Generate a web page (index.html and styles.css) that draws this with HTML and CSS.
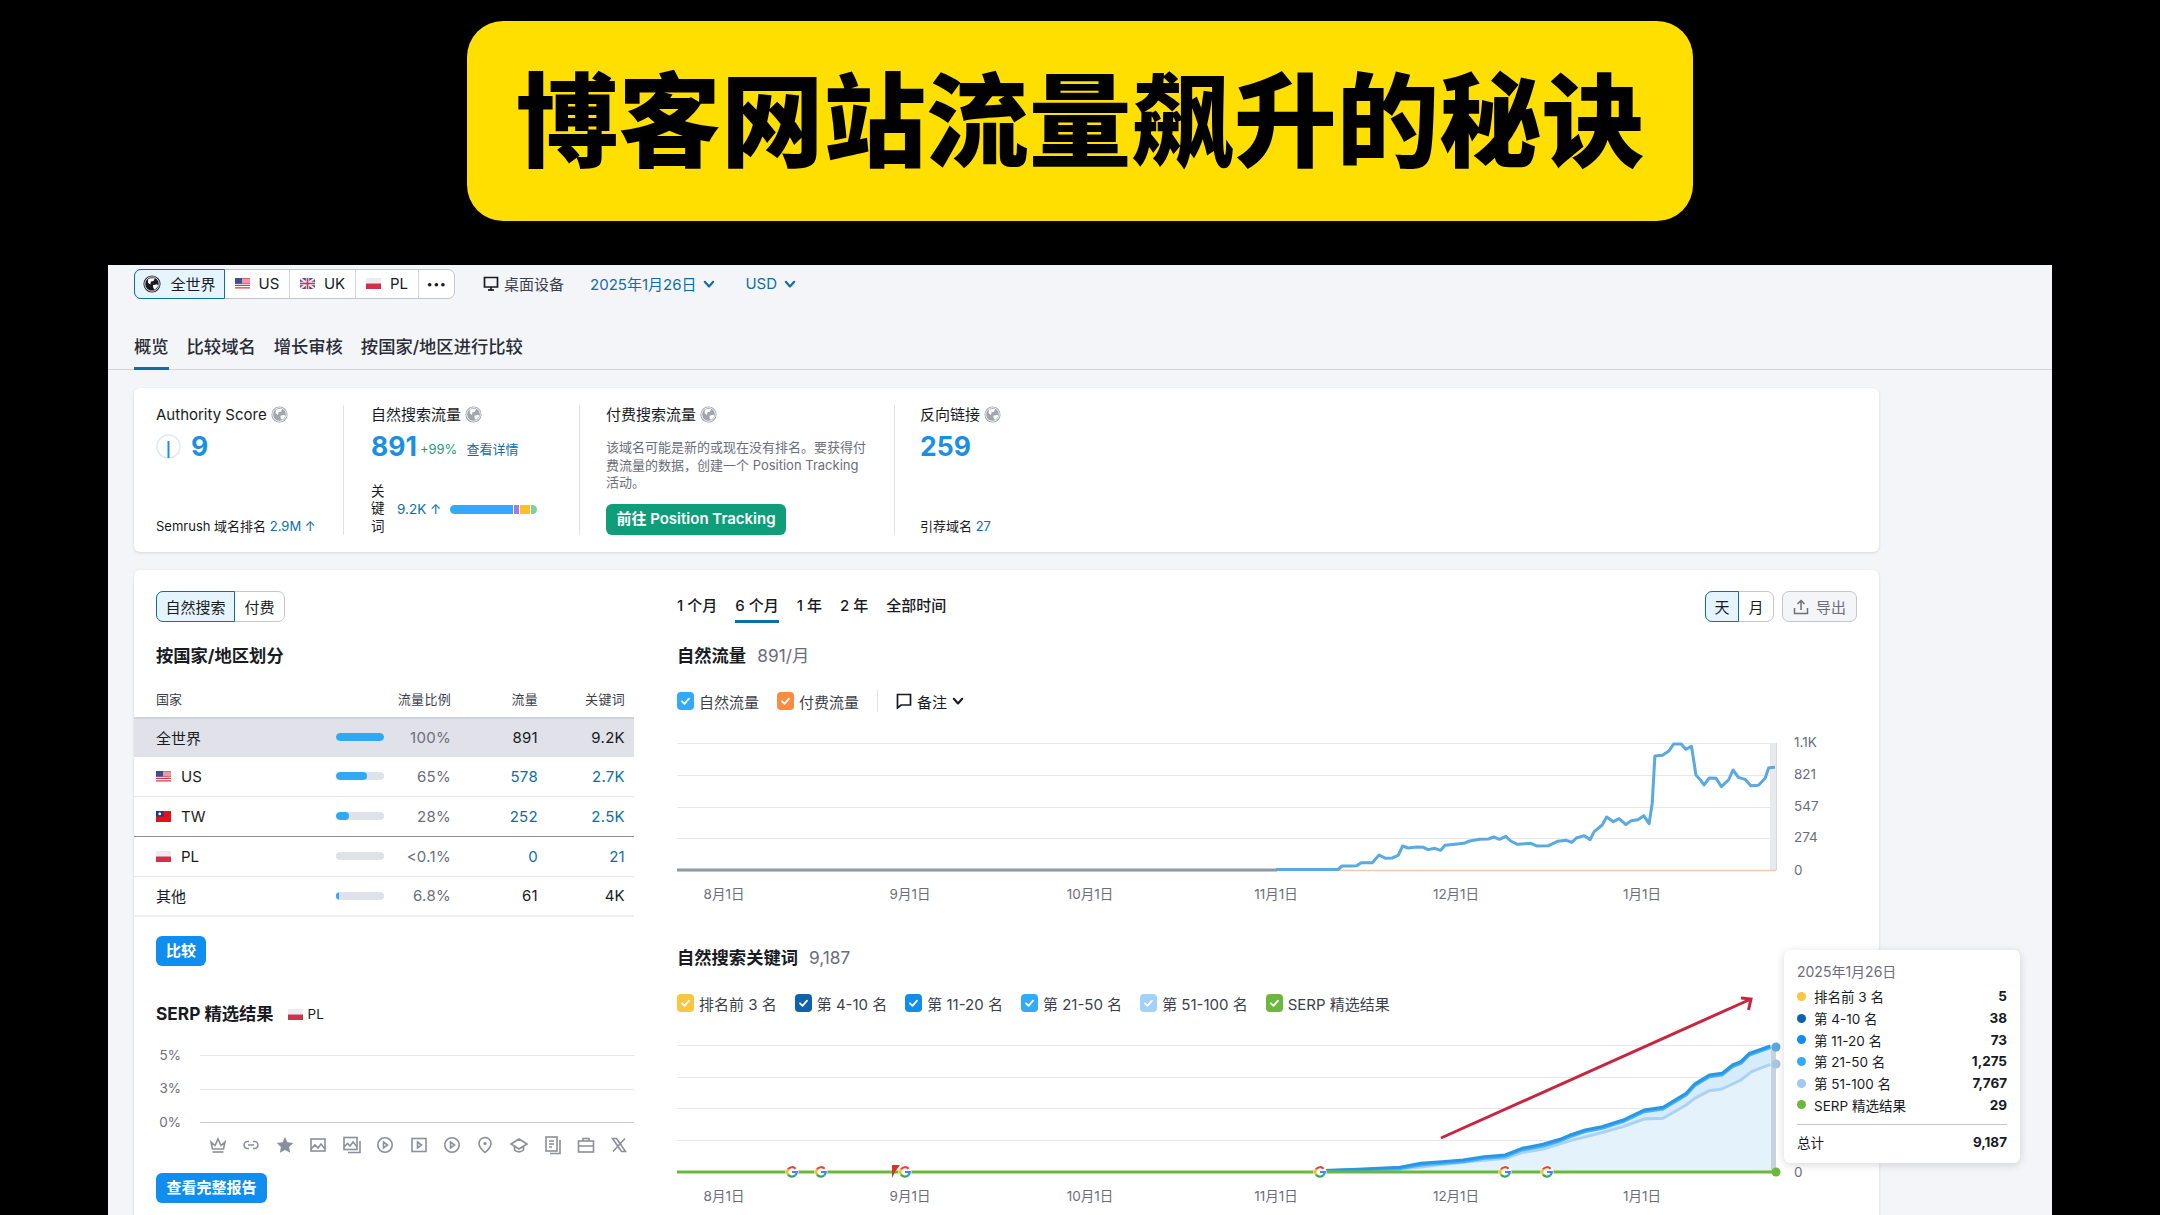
FILE: index.html
```html
<!DOCTYPE html>
<html lang="zh-CN">
<head>
  <meta charset="UTF-8">
  <title>博客网站流量飙升的秘诀</title>
  <link rel="stylesheet" href="styles.css">
</head>
<body>

<svg class="defs" width="0" height="0">
  <symbol id="globe" viewBox="0 0 16 16">
    <circle cx="8" cy="8" r="7.6" fill="currentColor"/>
    <path d="M4.6 3.6c2-1.4 4-.4 6-.8l-1.2 2.6-2.4.4-.4 2.6-2.2-1.6z" fill="#fff"/>
    <path d="M8.8 9.2l3.8-1 1 1.6-3.2 3.4-1.2-1.6z" fill="#fff"/>
    <circle cx="8" cy="8" r="6.4" fill="none" stroke="#fff" stroke-width=".8"/>
  </symbol>
  <symbol id="us" viewBox="0 0 15 11">
    <rect width="15" height="11" fill="#fff"/>
    <path d="M0 .8h15M0 3h15M0 5.2h15M0 7.4h15M0 9.8h15" stroke="#d8354a" stroke-width="1.2"/>
    <rect width="7" height="5.6" fill="#3d4f94"/>
  </symbol>
  <symbol id="uk" viewBox="0 0 15 11">
    <rect width="15" height="11" fill="#44528e"/>
    <path d="M0 0l15 11M15 0L0 11" stroke="#e9e9ef" stroke-width="2"/>
    <path d="M7.5 0v11M0 5.5h15" stroke="#e9e9ef" stroke-width="3.4"/>
    <path d="M7.5 0v11M0 5.5h15" stroke="#c9354a" stroke-width="1.6"/>
  </symbol>
  <symbol id="pl" viewBox="0 0 15 11">
    <rect width="15" height="5.5" fill="#ececf0"/>
    <rect y="5.5" width="15" height="5.5" fill="#d22f4a"/>
  </symbol>
  <symbol id="tw" viewBox="0 0 15 11">
    <rect width="15" height="11" fill="#e3101e"/>
    <rect width="7.5" height="5.5" fill="#1c2f93"/>
    <circle cx="3.75" cy="2.75" r="1.5" fill="#fff"/>
  </symbol>
  <symbol id="tick" viewBox="0 0 17 17">
    <path d="M5 8.8l2.5 2.5L12 6.2" fill="none" stroke="#fff" stroke-width="1.8" stroke-linecap="round" stroke-linejoin="round"/>
  </symbol>
  <symbol id="chev" viewBox="0 0 10 10">
    <path d="M1.5 3.2L5 7l3.5-3.8" fill="none" stroke="currentColor" stroke-width="1.8" stroke-linecap="round" stroke-linejoin="round"/>
  </symbol>
  <symbol id="gg" viewBox="0 0 14 14">
    <circle cx="7" cy="7" r="6.6" fill="#fff"/>
    <path d="M10.6 3.8A4.8 4.8 0 0 0 3 4.4" fill="none" stroke="#e8453c" stroke-width="2.2"/>
    <path d="M3 4.4a4.8 4.8 0 0 0 0 5.2" fill="none" stroke="#f6bb15" stroke-width="2.2"/>
    <path d="M3 9.6a4.8 4.8 0 0 0 7.4.6" fill="none" stroke="#34a853" stroke-width="2.2"/>
    <path d="M10.4 10.2A4.8 4.8 0 0 0 11.8 7H7" fill="none" stroke="#4285f4" stroke-width="2.2"/>
  </symbol>
</svg>

<!-- 标题 -->
<div class="banner">
  <div class="banner-pill">博客网站流量飙升的秘诀</div>
</div>

<div class="panel">

  <!-- 顶部工具栏 -->
  <div class="toolbar">
    <div class="seg seg-geo">
      <div class="seg-item active w-world"><svg class="ic-18"><use href="#globe"/></svg>全世界</div>
      <div class="seg-item w-us"><svg class="flag"><use href="#us"/></svg>US</div>
      <div class="seg-item w-uk"><svg class="flag"><use href="#uk"/></svg>UK</div>
      <div class="seg-item w-pl"><svg class="flag"><use href="#pl"/></svg>PL</div>
      <div class="seg-item w-more">•••</div>
    </div>
    <div class="device">
      <svg class="ic-16" viewBox="0 0 16 16"><path d="M1.500 1.500h13v9.500h-13z" fill="none" stroke="#191b23" stroke-width="1.7"/><path d="M5 14h6" stroke="#191b23" stroke-width="1.7"/><path d="M8 11v3" stroke="#191b23" stroke-width="1.7"/></svg>
      桌面设备
    </div>
    <div class="picker picker-date">2025年1月26日<svg class="chev"><use href="#chev"/></svg></div>
    <div class="picker picker-usd">USD<svg class="chev"><use href="#chev"/></svg></div>
  </div>

  <div class="tabs">
    <div class="tab active">概览</div>
    <div class="tab">比较域名</div>
    <div class="tab">增长审核</div>
    <div class="tab">按国家/地区进行比较</div>
  </div>

  <!-- 指标卡片 -->
  <div class="card card-stats">
    <div class="stat stat-as">
      <div class="stat-label">Authority Score <svg class="ic-17"><use href="#globe"/></svg></div>
      <div class="stat-value">
        <svg class="gauge" viewBox="0 0 25 25"><circle cx="12.500" cy="12.500" r="11.500" fill="none" stroke="#dfe9f5" stroke-width="1.500"/><path d="M12.500 7v17" stroke="#1a8fe3" stroke-width="2"/></svg>
        <span class="big">9</span>
      </div>
      <div class="stat-foot">Semrush 域名排名 <span class="link">2.9M ↑</span></div>
    </div>
    <div class="stat stat-organic">
      <div class="stat-label">自然搜索流量 <svg class="ic-17"><use href="#globe"/></svg></div>
      <div class="stat-value">
        <span class="big">891</span>
        <span class="delta">+99%</span>
        <span class="detail">查看详情</span>
      </div>
      <div class="kw-row">
        <span class="kw-label">关键词</span>
        <span class="link kw-num">9.2K ↑</span>
        <div class="kw-bar">
          <i class="kb-blue"></i><i class="kb-purple"></i><i class="kb-yellow"></i><i class="kb-green"></i>
        </div>
      </div>
    </div>
    <div class="stat stat-paid">
      <div class="stat-label">付费搜索流量 <svg class="ic-17"><use href="#globe"/></svg></div>
      <p class="stat-desc">该域名可能是新的或现在没有排名。要获得付费流量的数据，创建一个 Position Tracking 活动。</p>
      <div class="btn-green">前往 Position Tracking</div>
    </div>
    <div class="stat stat-links">
      <div class="stat-label">反向链接 <svg class="ic-17"><use href="#globe"/></svg></div>
      <div class="stat-value"><span class="big">259</span></div>
      <div class="stat-foot">引荐域名 <span class="link">27</span></div>
    </div>
  </div>

  <!-- 主卡片 -->
  <div class="card card-main">
    <div class="col-left">
      <div class="seg seg-type">
        <div class="seg-item active w-org">自然搜索</div>
        <div class="seg-item w-paid">付费</div>
      </div>
      <h3 class="title">按国家/地区划分</h3>

      <div class="geo-table">
        <div class="geo-row geo-head">
          <span>国家</span><span></span><span class="num">流量比例</span><span class="num">流量</span><span class="num">关键词</span>
        </div>
        <div class="geo-row row-sel">
          <span>全世界</span>
          <div class="bar"><i style="width: 100%"></i></div>
          <span class="num pct">100%</span><span class="num">891</span><span class="num">9.2K</span>
        </div>
        <div class="geo-row">
          <span class="geo-name"><svg class="flag"><use href="#us"/></svg>US</span>
          <div class="bar"><i style="width: 65%"></i></div>
          <span class="num pct">65%</span><span class="num link">578</span><span class="num link">2.7K</span>
        </div>
        <div class="geo-row row-dark">
          <span class="geo-name"><svg class="flag"><use href="#tw"/></svg>TW</span>
          <div class="bar"><i style="width: 28%"></i></div>
          <span class="num pct">28%</span><span class="num link">252</span><span class="num link">2.5K</span>
        </div>
        <div class="geo-row">
          <span class="geo-name"><svg class="flag"><use href="#pl"/></svg>PL</span>
          <div class="bar"></div>
          <span class="num pct">&lt;0.1%</span><span class="num link">0</span><span class="num link">21</span>
        </div>
        <div class="geo-row row-last">
          <span>其他</span>
          <div class="bar"><i style="width: 6.8%"></i></div>
          <span class="num pct">6.8%</span><span class="num">61</span><span class="num">4K</span>
        </div>
      </div>

      <div class="btn-blue btn-compare">比较</div>

      <h3 class="title title-serp">SERP 精选结果 <span class="serp-geo"><svg class="flag"><use href="#pl"/></svg>PL</span></h3>

      <svg class="serp-chart" viewBox="134 1026 500 139">
        <g class="grid-line">
          <path d="M200 1055.500h434M200 1089.500h434"/>
          <path class="grid-base" d="M200 1122.500h434"/>
        </g>
        <g class="axis-text">
          <text x="181" y="1060" text-anchor="end">5%</text>
          <text x="181" y="1093" text-anchor="end">3%</text>
          <text x="181" y="1127" text-anchor="end">0%</text>
        </g>
        <g class="serp-icons">
          <g transform="translate(209 1136)"><path d="M2 6l4 3.500L9 3l3 6.500L16 6l-1.500 7h-11z"/><path d="M3.500 16h11"/></g>
          <g transform="translate(242 1136)"><path d="M7 5.500H5.500a3.500 3.500 0 0 0 0 7H7M11 5.500h1.500a3.500 3.500 0 0 1 0 7H11M6 9h6"/></g>
          <g transform="translate(276 1136)"><path class="solid" d="M9 1l2.500 5.200 5.700.8-4.100 4 1 5.700L9 14l-5.100 2.700 1-5.700-4.100-4 5.700-.8z"/></g>
          <g transform="translate(309 1136)"><rect x="2" y="3" width="14" height="12"/><path d="M2 13l4-4 3 3 3-4 4 5"/></g>
          <g transform="translate(343 1136)"><rect x="1" y="1.500" width="13" height="12"/><path d="M1 11l3.500-3.500 2.500 2.500 3-4 4 4.500M17 5v11.500H5"/></g>
          <g transform="translate(376 1136)"><circle cx="9" cy="9" r="7.200"/><path d="M7.500 6l4 3-4 3z"/></g>
          <g transform="translate(410 1136)"><rect x="2" y="2.500" width="14" height="13"/><path d="M7.500 6l4 3-4 3z"/></g>
          <g transform="translate(443 1136)"><circle cx="9" cy="9" r="7.200"/><path d="M7.500 6l4 3-4 3z"/></g>
          <g transform="translate(476 1136)"><path d="M9 1.500a6 6 0 0 1 6 6c0 4-6 9-6 9s-6-5-6-9a6 6 0 0 1 6-6z"/><circle class="solid" cx="9" cy="7.500" r="1.600"/></g>
          <g transform="translate(510 1136)"><path d="M9 3L1 8l8 5 8-5zM4.500 10.500V14c2.500 2.500 6.500 2.500 9 0v-3.500"/></g>
          <g transform="translate(544 1136)"><rect x="2" y="1" width="11" height="14"/><path d="M5 5h5M5 8h5M5 11h3M16 4v13.500H6"/></g>
          <g transform="translate(577 1136)"><rect x="1.500" y="5" width="15" height="11"/><path d="M6 5V2.500h6V5M1.500 10h15"/></g>
          <g transform="translate(610 1136)"><path d="M2.500 2.500h4l9 13h-4zM15 2.500L3 15.500"/></g>
        </g>
      </svg>

      <div class="btn-blue btn-report">查看完整报告</div>
    </div>

    <div class="col-right">
      <div class="period-row">
        <div class="periods">
          <div class="period">1 个月</div>
          <div class="period active">6 个月</div>
          <div class="period">1 年</div>
          <div class="period">2 年</div>
          <div class="period">全部时间</div>
        </div>
        <div class="period-tools">
          <div class="seg">
            <div class="seg-item active w-day">天</div>
            <div class="seg-item w-day">月</div>
          </div>
          <div class="btn-export">
            <svg class="ic-16" viewBox="0 0 16 16"><path d="M8 11V2M4.500 5L8 1.500 11.500 5M1.500 9v5.500h13V9" fill="none" stroke="#6c6e79" stroke-width="1.500"/></svg>
            导出
          </div>
        </div>
      </div>

      <h3 class="title">自然流量 <span class="title-sub">891/月</span></h3>
      <div class="legend legend-traffic">
        <div class="lg-item"><svg class="check c-sky"><use href="#tick"/></svg>自然流量</div>
        <div class="lg-item"><svg class="check c-orange"><use href="#tick"/></svg>付费流量</div>
        <div class="lg-divider"></div>
        <div class="lg-note">
          <svg class="ic-16" viewBox="0 0 16 16"><path d="M1.500 1.500h13v10.500H5L1.500 15z" fill="none" stroke="#191b23" stroke-width="1.700"/></svg>
          备注<svg class="chev"><use href="#chev"/></svg>
        </div>
      </div>

      <svg class="chart chart-traffic" viewBox="677 735 1163 175">
        <g class="grid-line"><path d="M677 743.500h1099M677 775.500h1099M677 807.500h1099M677 838.500h1099"/></g>
        <rect x="1770" y="743" width="6" height="127" fill="#e8e9ec"/>
        <path d="M1776.500 743v127" stroke="#d5d7dc"/>
        <path d="M677 870.500h1099" stroke="#f0c9b0" stroke-width="1.500"/>
        <path d="M677 870h600" stroke="#8d9ba9" stroke-width="3"/>
        <polyline class="line-traffic" points="1276,869.500 1338,869.500 1342,866 1350,866"/>
        <polyline class="line-traffic" transform="translate(1350 700) scale(.4464 .3333)" points="0,498 15,497 25,488 50,488 65,465 80,475 95,474 108,466 118,438 130,444 150,441 165,442 175,449 190,445 203,451 213,436 240,432 255,430 268,423 290,418 310,417 322,411 335,418 349,409 360,423 375,433 405,430 418,438 445,437 465,424 485,421 497,427 507,414 525,407 538,419 547,395 565,375 575,351 590,365 603,356 618,374 630,362 645,359 658,347 670,371 677,310 683,168 700,166 715,152 725,132 742,132 752,148 765,139 775,225 785,240 793,255 805,234 820,235 832,260 848,240 858,210 870,232 885,238 898,257 915,256 930,235 938,203 952,202"/>
        <g class="axis-text">
          <text x="724" y="899" text-anchor="middle">8月1日</text>
          <text x="910" y="899" text-anchor="middle">9月1日</text>
          <text x="1090" y="899" text-anchor="middle">10月1日</text>
          <text x="1276" y="899" text-anchor="middle">11月1日</text>
          <text x="1456" y="899" text-anchor="middle">12月1日</text>
          <text x="1642" y="899" text-anchor="middle">1月1日</text>
          <text x="1794" y="747">1.1K</text>
          <text x="1794" y="779">821</text>
          <text x="1794" y="811">547</text>
          <text x="1794" y="842">274</text>
          <text x="1794" y="875">0</text>
        </g>
      </svg>

      <h3 class="title title-kw">自然搜索关键词 <span class="title-sub">9,187</span></h3>
      <div class="legend legend-kw">
        <div class="lg-item"><svg class="check c-yellow"><use href="#tick"/></svg>排名前 3 名</div>
        <div class="lg-item"><svg class="check c-navy"><use href="#tick"/></svg>第 4-10 名</div>
        <div class="lg-item"><svg class="check c-blue"><use href="#tick"/></svg>第 11-20 名</div>
        <div class="lg-item"><svg class="check c-sky"><use href="#tick"/></svg>第 21-50 名</div>
        <div class="lg-item"><svg class="check c-pale"><use href="#tick"/></svg>第 51-100 名</div>
        <div class="lg-item"><svg class="check c-green"><use href="#tick"/></svg>SERP 精选结果</div>
      </div>

      <svg class="chart chart-keywords" viewBox="677 1035 1163 180">
        <g class="grid-line"><path d="M677 1045.500h1099M677 1077.500h1099M677 1108.500h1099M677 1140.500h1099"/></g>
        <g transform="translate(1400 930) scale(.4209 .3333)">
          <polygon fill="#cfe8fb" fill-opacity=".85" points="-295,725 -200,722 -100,718 0,712 50,700 100,695 150,690 200,680 250,675 290,655 340,643 380,628 405,615 440,600 480,590 530,570 580,540 625,532 680,490 700,462 735,435 765,430 790,405 810,395 830,370 880,348 892,348 892,725"/>
          <polygon fill="#e4f2fc" points="-295,725 -200,723 -100,720 0,718 150,697 250,685 290,668 340,657 405,632 480,608 530,590 580,567 625,565 680,525 700,505 735,482 765,477 810,450 835,425 892,403 892,725"/>
          <polyline class="line-kw pale" points="-200,723 -100,720 0,718 150,697 250,685 290,668 340,657 405,632 480,608 530,590 580,567 625,565 680,525 700,505 735,482 765,477 810,450 835,425 880,403"/>
          <polyline class="line-kw sky" points="-200,723 -100,719 0,716 50,705 100,700 150,695 200,685 250,680 290,660 340,648 380,633 405,620 440,605 480,595 530,575 580,545 625,537 680,495 700,467 735,440 765,435 790,410 810,400 830,375 880,353"/>
          <polyline class="line-kw navy" points="-200,722 -100,718 0,712 50,700 100,695 150,690 200,680 250,675 290,655 340,643 380,628 405,615 440,600 480,590 530,570 580,540 625,532 680,490 700,462 735,435 765,430 790,405 810,395 830,370 880,348"/>
        </g>
        <path d="M1773.500 1047v125" stroke="#c6d3df" stroke-width="5"/>
        <path d="M677 1172h1099" stroke="#6cb83d" stroke-width="3"/>
        <circle cx="1776" cy="1047" r="4.500" fill="#5ba7de"/>
        <circle cx="1776" cy="1064" r="4.500" fill="#a6c6e4"/>
        <circle cx="1776" cy="1172" r="4.500" fill="#6cb83d"/>

        <path d="M892 1165l8 0 -5 7 -3 6z" fill="#d8322d"/>
        <use href="#gg" x="785" y="1165" width="14" height="14"/>
        <use href="#gg" x="814" y="1165" width="14" height="14"/>
        <use href="#gg" x="898" y="1165" width="14" height="14"/>
        <use href="#gg" x="1313" y="1165" width="14" height="14"/>
        <use href="#gg" x="1498" y="1165" width="14" height="14"/>
        <use href="#gg" x="1540" y="1165" width="14" height="14"/>

        <path d="M1441 1138L1751 999M1741 998l10 1-2.500 11" fill="none" stroke="#c8263f" stroke-width="3"/>

        <g class="axis-text">
          <text x="724" y="1201" text-anchor="middle">8月1日</text>
          <text x="910" y="1201" text-anchor="middle">9月1日</text>
          <text x="1090" y="1201" text-anchor="middle">10月1日</text>
          <text x="1276" y="1201" text-anchor="middle">11月1日</text>
          <text x="1456" y="1201" text-anchor="middle">12月1日</text>
          <text x="1642" y="1201" text-anchor="middle">1月1日</text>
          <text x="1794" y="1177">0</text>
        </g>
      </svg>
    </div>
  </div>

  <!-- 悬浮提示 -->
  <div class="tip">
    <div class="tip-date">2025年1月26日</div>
    <div class="tip-row"><i class="dot d-yellow"></i><span>排名前 3 名</span><b>5</b></div>
    <div class="tip-row"><i class="dot d-navy"></i><span>第 4-10 名</span><b>38</b></div>
    <div class="tip-row"><i class="dot d-blue"></i><span>第 11-20 名</span><b>73</b></div>
    <div class="tip-row"><i class="dot d-sky"></i><span>第 21-50 名</span><b>1,275</b></div>
    <div class="tip-row"><i class="dot d-pale"></i><span>第 51-100 名</span><b>7,767</b></div>
    <div class="tip-row"><i class="dot d-green"></i><span>SERP 精选结果</span><b>29</b></div>
    <div class="tip-total"><span>总计</span><b>9,187</b></div>
  </div>
</div>

</body>
</html>
```

FILE: styles.css
```css
* {
  box-sizing: border-box;
}

html, body {
  margin: 0;
  width: 2160px;
  height: 1215px;
  overflow: hidden;
  background: #000;
}

body {
  font-family: Inter, "Noto Sans CJK SC", sans-serif;
  font-size: 15px;
  color: #191b23;
}

.defs {
  position: absolute;
}

/* 标题 */
.banner {
  height: 265px;
  padding-top: 21px;
  display: flex;
  justify-content: center;
}

.banner-pill {
  width: 1226px;
  height: 200px;
  padding-top: 2px;
  display: flex;
  align-items: center;
  justify-content: center;
  background: #ffdf00;
  border-radius: 36px;
  color: #000;
  font-size: 102.6px;
  font-weight: 900;
  line-height: 1;
  white-space: nowrap;
}

/* 面板 */
.panel {
  position: relative;
  width: 1944px;
  height: 950px;
  margin-left: 108px;
  background: #f4f5f9;
}

.toolbar {
  height: 34px;
  padding: 4px 0 0 26px;
  display: flex;
  align-items: center;
}

.seg {
  display: flex;
  height: 31px;
  background: #fff;
  border: 1px solid #c4c7cf;
  border-radius: 7px;
}

.seg-geo {
  height: 30px;
}

.seg-item {
  display: flex;
  align-items: center;
  justify-content: center;
  gap: 9px;
  padding-bottom: 1px;
  border-right: 1px solid #d4d6dc;
}

.seg-item:last-child {
  border-right: 0;
}

.seg-item.active {
  margin: -1px 0 -1px -1px;
  background: #e6f4fd;
  border: 1px solid #0f6ea8;
  border-radius: 7px 0 0 7px;
}

.w-world { width: 91px; }
.w-us { width: 65px; }
.w-uk { width: 66px; }
.w-pl { width: 63px; }
.w-more { width: 35px; font-size: 11px; letter-spacing: .5px; }
.w-org { width: 80px; }
.w-paid { width: 50px; }
.w-day { width: 34px; }

.flag {
  width: 15px;
  height: 11px;
  flex: none;
}

.ic-18 { width: 18px; height: 18px; color: #191b23; }
.ic-17 { width: 17px; height: 17px; color: #a2a5ae; vertical-align: -3px; }
.ic-16 { width: 16px; height: 16px; flex: none; }

.device {
  margin-left: 28px;
  display: flex;
  align-items: center;
  gap: 5px;
  padding-bottom: 1px;
  color: #3d3f4a;
}

.picker {
  display: flex;
  align-items: center;
  gap: 7px;
  padding-bottom: 1px;
  color: #0f6ea8;
}

.picker-date { margin-left: 26px; }
.picker-usd { margin-left: 30px; }

.chev {
  width: 12px;
  height: 12px;
  flex: none;
}

/* 标签页 */
.tabs {
  height: 71px;
  padding: 31px 0 0 26px;
  display: flex;
  gap: 18px;
  box-shadow: inset 0 -1px 0 #d1d4db;
}

.tab {
  height: 40px;
  line-height: 34px;
  font-size: 17.3px;
  font-weight: 500;
  color: #2a2c36;
}

.tab.active {
  border-bottom: 3px solid #0f6ea8;
}

/* 卡片 */
.card {
  margin-left: 26px;
  width: 1745px;
  background: #fff;
  border-radius: 6px;
  box-shadow: 0 1px 3px rgba(25, 27, 35, .14);
}

.card-stats {
  height: 164px;
  margin-top: 18px;
  padding: 17px 0 17px 22px;
  display: flex;
}

.stat {
  height: 130px;
  display: flex;
  flex-direction: column;
  border-right: 1px solid #dfe1e6;
}

.stat-as { width: 188px; }
.stat-organic { width: 236px; padding-left: 27px; }
.stat-paid { width: 315px; padding-left: 26px; padding-right: 20px; }
.stat-links { padding-left: 25px; border-right: 0; }

.stat-label {
  height: 20px;
  line-height: 20px;
  white-space: nowrap;
}

.stat-value {
  height: 26px;
  margin-top: 8px;
  display: flex;
  align-items: center;
}

.gauge {
  width: 25px;
  height: 25px;
  margin-right: 10px;
}

.big {
  font-size: 26.5px;
  font-weight: 700;
  line-height: 26px;
  color: #1a8fe3;
}

.delta {
  margin: 5px 0 0 3px;
  font-size: 13px;
  color: #1f9a74;
}

.detail {
  margin: 5px 0 0 9px;
  font-size: 13px;
  color: #0f6ea8;
}

.stat-foot {
  margin-top: auto;
  height: 18px;
  line-height: 18px;
  font-size: 13px;
  white-space: nowrap;
}

.link {
  color: #0f6ea8;
}

.kw-row {
  margin-top: auto;
  height: 52px;
  display: flex;
  align-items: center;
}

.kw-label {
  width: 14px;
  font-size: 13.5px;
  line-height: 17.5px;
}

.kw-num {
  margin-left: 12px;
  font-size: 13.5px;
  white-space: nowrap;
}

.kw-bar {
  width: 87px;
  height: 9px;
  margin-left: 9px;
  display: flex;
  gap: 1px;
  border-radius: 5px;
  overflow: hidden;
}

.kw-bar i { display: block; }
.kb-blue { width: 63px; background: #33aaf7; }
.kb-purple { width: 6px; background: #a77bd8; }
.kb-yellow { width: 10px; background: #fbc02d; }
.kb-green { width: 6px; background: #7ed0a0; }

.stat-desc {
  margin: 14px 0 0;
  font-size: 13px;
  line-height: 17.5px;
  color: #6c6e79;
}

.btn-green {
  margin-top: auto;
  width: 180px;
  height: 31px;
  line-height: 30px;
  text-align: center;
  background: #0f9d7a;
  border-radius: 6px;
  color: #fff;
  font-weight: 600;
  white-space: nowrap;
}

.card-main {
  height: 660px;
  margin-top: 18px;
  padding-top: 21px;
  display: flex;
}

.col-left {
  width: 500px;
}

.col-left > .seg,
.col-left > .title,
.col-left > .btn-blue {
  margin-left: 22px;
}

.seg-type {
  width: 129px;
}

.title {
  height: 24px;
  margin: 22px 0 0;
  line-height: 24px;
  font-size: 17.3px;
  font-weight: 700;
  white-space: nowrap;
}

.title-sub {
  margin-left: 7px;
  font-weight: 400;
  color: #6c6e79;
}

/* 国家表格 */
.geo-row {
  height: 40px;
  padding-left: 22px;
  padding-bottom: 1px;
  display: grid;
  grid-template-columns: 180px 48px 67px 87px 87px;
  align-items: center;
  border-bottom: 1px solid #e6e7eb;
}

.geo-head {
  height: 49px;
  padding-top: 20px;
  padding-bottom: 9px;
  font-size: 13px;
  border-bottom: 0;
  color: #3d3f4a;
}

.row-sel {
  padding-bottom: 2px;
  background: #e0e1e9;
  border-top: 2px solid #d0d2da;
  border-bottom: 0;
}

.row-dark { border-bottom-color: #8f9199; }
.row-last { border-bottom: 2px solid #eeeff2; }

.geo-name {
  display: flex;
  align-items: center;
  gap: 10px;
}

.num {
  text-align: right;
  letter-spacing: .3px;
}

.pct {
  color: #6c6e79;
}

.bar {
  height: 8px;
  background: #e0e1e9;
  border-radius: 4px;
  overflow: hidden;
}

.row-sel .bar {
  background: transparent;
}

.bar i {
  display: block;
  height: 100%;
  background: #2fa9f6;
  border-radius: 4px;
}

.btn-blue {
  height: 30px;
  line-height: 29px;
  text-align: center;
  background: #0f8eef;
  border-radius: 6px;
  color: #fff;
  font-weight: 600;
}

.btn-compare {
  width: 50px;
  margin-top: 19px;
}

.btn-report {
  width: 111px;
  margin-top: 8px;
}

.title-serp {
  margin-top: 36px;
  display: flex;
  align-items: center;
}

.serp-geo {
  margin-left: 14px;
  display: flex;
  align-items: center;
  gap: 5px;
  font-size: 13.5px;
  font-weight: 400;
}

.serp-chart {
  display: block;
  width: 500px;
  height: 139px;
}

.grid-line {
  fill: none;
  stroke: #e6e7eb;
}

.grid-base {
  stroke: #c9cbd2;
}

.axis-text {
  font-size: 13.5px;
  fill: #6c6e79;
}

.serp-icons {
  fill: none;
  stroke: #8b8f9c;
  stroke-width: 1.6;
}

.serp-icons .solid {
  fill: #8b8f9c;
  stroke: none;
}

/* 右侧图表 */
.col-right {
  width: 1180px;
  margin-left: 43px;
}

.period-row {
  height: 31px;
  display: flex;
  justify-content: space-between;
}

.periods {
  display: flex;
  gap: 18px;
}

.period {
  height: 32px;
  line-height: 30px;
  font-weight: 500;
  white-space: nowrap;
}

.period.active {
  border-bottom: 3px solid #0f6ea8;
}

.period-tools {
  display: flex;
  gap: 8px;
}

.btn-export {
  width: 75px;
  height: 31px;
  display: flex;
  align-items: center;
  justify-content: center;
  gap: 7px;
  background: #f4f5f9;
  border: 1px solid #c4c7cf;
  border-radius: 7px;
  color: #6c6e79;
}

.legend {
  height: 24px;
  margin-top: 21px;
  display: flex;
  align-items: center;
  gap: 18px;
  font-size: 15px;
}

.lg-item {
  display: flex;
  align-items: center;
  gap: 5px;
  white-space: nowrap;
  color: #3d3f4a;
}

.check {
  width: 17px;
  height: 18px;
  flex: none;
  border-radius: 4px;
}

.c-sky { background: #33aaf7; }
.c-orange { background: #f78c42; }
.c-yellow { background: #fbc441; }
.c-navy { background: #0f62ad; }
.c-blue { background: #0f8eef; }
.c-pale { background: #a0d2fa; }
.c-green { background: #6cb83d; }

.lg-divider {
  width: 1px;
  height: 22px;
  background: #dfe1e6;
}

.lg-note {
  display: flex;
  align-items: center;
  gap: 5px;
}

.chart {
  display: block;
  width: 1163px;
  overflow: visible;
}

.chart-traffic {
  height: 175px;
  margin-top: 22px;
}

.chart-keywords {
  height: 180px;
  margin-top: 20px;
}

.title-kw {
  margin-top: 36px;
}

.line-traffic {
  fill: none;
  stroke: #5aa9e0;
  stroke-width: 3;
  stroke-linejoin: round;
  vector-effect: non-scaling-stroke;
}

.line-kw {
  fill: none;
  stroke-linejoin: round;
  stroke-width: 3;
  vector-effect: non-scaling-stroke;
}

.line-kw.pale { stroke: #a9d2f4; }
.line-kw.sky { stroke: #45b1f7; }
.line-kw.navy { stroke: #2a97e4; }

/* 悬浮提示 */
.tip {
  position: absolute;
  left: 1676px;
  top: 685px;
  width: 236px;
  height: 213px;
  padding: 12px 13px 0;
  background: #fff;
  border-radius: 6px;
  box-shadow: 0 2px 8px rgba(25, 27, 35, .16);
  font-size: 13.5px;
}

.tip-date {
  height: 20px;
  line-height: 20px;
  margin-bottom: 3.5px;
  font-size: 14px;
  color: #6c6e79;
}

.tip-row {
  height: 21.7px;
  display: flex;
  align-items: center;
}

.tip-row span {
  flex: 1;
}

.dot {
  width: 9px;
  height: 9px;
  margin-right: 8px;
  border-radius: 50%;
}

.d-yellow { background: #fbc441; }
.d-navy { background: #0f62ad; }
.d-blue { background: #0f8eef; }
.d-sky { background: #33aaf7; }
.d-pale { background: #a0c8f0; }
.d-green { background: #6cb83d; }

.tip-total {
  margin-top: 8px;
  height: 36px;
  display: flex;
  align-items: center;
  justify-content: space-between;
  border-top: 1px solid #c4c7cf;
}
```
